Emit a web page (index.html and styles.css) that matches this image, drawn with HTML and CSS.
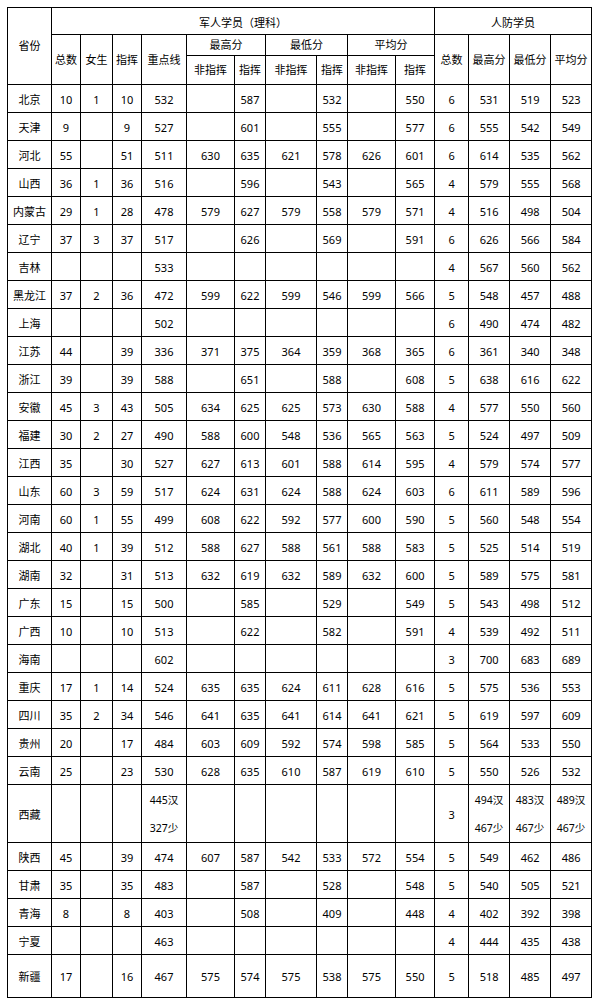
FILE: index.html
```html
<!DOCTYPE html>
<html lang="zh">
<head>
<meta charset="utf-8">
<title>录取分数</title>
<link rel="stylesheet" href="styles.css">
</head>
<body>
<table class="score">
<colgroup>
<col class="c44"><col class="c29"><col class="c32"><col class="c29"><col class="c45">
<col class="c48"><col class="c31"><col class="c51"><col class="c31"><col class="c48"><col class="c39">
<col class="c34"><col class="c41"><col class="c41"><col class="c41">
</colgroup>
<thead>
<tr class="h1"><th rowspan="3">省份</th><th colspan="10" class="grp">军人学员（理科）</th><th colspan="4" class="grp">人防学员</th></tr>
<tr class="h2"><th rowspan="2">总数</th><th rowspan="2">女生</th><th rowspan="2">指挥</th><th rowspan="2">重点线</th><th colspan="2">最高分</th><th colspan="2">最低分</th><th colspan="2">平均分</th><th rowspan="2">总数</th><th rowspan="2">最高分</th><th rowspan="2">最低分</th><th rowspan="2">平均分</th></tr>
<tr class="h3"><th>非指挥</th><th>指挥</th><th>非指挥</th><th>指挥</th><th>非指挥</th><th>指挥</th></tr>
</thead>
<tbody>
<tr><td>北京</td><td>10</td><td>1</td><td>10</td><td>532</td><td></td><td>587</td><td></td><td>532</td><td></td><td>550</td><td>6</td><td>531</td><td>519</td><td>523</td></tr>
<tr><td>天津</td><td>9</td><td></td><td>9</td><td>527</td><td></td><td>601</td><td></td><td>555</td><td></td><td>577</td><td>6</td><td>555</td><td>542</td><td>549</td></tr>
<tr><td>河北</td><td>55</td><td></td><td>51</td><td>511</td><td>630</td><td>635</td><td>621</td><td>578</td><td>626</td><td>601</td><td>6</td><td>614</td><td>535</td><td>562</td></tr>
<tr><td>山西</td><td>36</td><td>1</td><td>36</td><td>516</td><td></td><td>596</td><td></td><td>543</td><td></td><td>565</td><td>4</td><td>579</td><td>555</td><td>568</td></tr>
<tr><td>内蒙古</td><td>29</td><td>1</td><td>28</td><td>478</td><td>579</td><td>627</td><td>579</td><td>558</td><td>579</td><td>571</td><td>4</td><td>516</td><td>498</td><td>504</td></tr>
<tr><td>辽宁</td><td>37</td><td>3</td><td>37</td><td>517</td><td></td><td>626</td><td></td><td>569</td><td></td><td>591</td><td>6</td><td>626</td><td>566</td><td>584</td></tr>
<tr><td>吉林</td><td></td><td></td><td></td><td>533</td><td></td><td></td><td></td><td></td><td></td><td></td><td>4</td><td>567</td><td>560</td><td>562</td></tr>
<tr><td>黑龙江</td><td>37</td><td>2</td><td>36</td><td>472</td><td>599</td><td>622</td><td>599</td><td>546</td><td>599</td><td>566</td><td>5</td><td>548</td><td>457</td><td>488</td></tr>
<tr><td>上海</td><td></td><td></td><td></td><td>502</td><td></td><td></td><td></td><td></td><td></td><td></td><td>6</td><td>490</td><td>474</td><td>482</td></tr>
<tr><td>江苏</td><td>44</td><td></td><td>39</td><td>336</td><td>371</td><td>375</td><td>364</td><td>359</td><td>368</td><td>365</td><td>6</td><td>361</td><td>340</td><td>348</td></tr>
<tr><td>浙江</td><td>39</td><td></td><td>39</td><td>588</td><td></td><td>651</td><td></td><td>588</td><td></td><td>608</td><td>5</td><td>638</td><td>616</td><td>622</td></tr>
<tr><td>安徽</td><td>45</td><td>3</td><td>43</td><td>505</td><td>634</td><td>625</td><td>625</td><td>573</td><td>630</td><td>588</td><td>4</td><td>577</td><td>550</td><td>560</td></tr>
<tr><td>福建</td><td>30</td><td>2</td><td>27</td><td>490</td><td>588</td><td>600</td><td>548</td><td>536</td><td>565</td><td>563</td><td>5</td><td>524</td><td>497</td><td>509</td></tr>
<tr><td>江西</td><td>35</td><td></td><td>30</td><td>527</td><td>627</td><td>613</td><td>601</td><td>588</td><td>614</td><td>595</td><td>4</td><td>579</td><td>574</td><td>577</td></tr>
<tr><td>山东</td><td>60</td><td>3</td><td>59</td><td>517</td><td>624</td><td>631</td><td>624</td><td>588</td><td>624</td><td>603</td><td>6</td><td>611</td><td>589</td><td>596</td></tr>
<tr><td>河南</td><td>60</td><td>1</td><td>55</td><td>499</td><td>608</td><td>622</td><td>592</td><td>577</td><td>600</td><td>590</td><td>5</td><td>560</td><td>548</td><td>554</td></tr>
<tr><td>湖北</td><td>40</td><td>1</td><td>39</td><td>512</td><td>588</td><td>627</td><td>588</td><td>561</td><td>588</td><td>583</td><td>5</td><td>525</td><td>514</td><td>519</td></tr>
<tr><td>湖南</td><td>32</td><td></td><td>31</td><td>513</td><td>632</td><td>619</td><td>632</td><td>589</td><td>632</td><td>600</td><td>5</td><td>589</td><td>575</td><td>581</td></tr>
<tr><td>广东</td><td>15</td><td></td><td>15</td><td>500</td><td></td><td>585</td><td></td><td>529</td><td></td><td>549</td><td>5</td><td>543</td><td>498</td><td>512</td></tr>
<tr><td>广西</td><td>10</td><td></td><td>10</td><td>513</td><td></td><td>622</td><td></td><td>582</td><td></td><td>591</td><td>4</td><td>539</td><td>492</td><td>511</td></tr>
<tr><td>海南</td><td></td><td></td><td></td><td>602</td><td></td><td></td><td></td><td></td><td></td><td></td><td>3</td><td>700</td><td>683</td><td>689</td></tr>
<tr><td>重庆</td><td>17</td><td>1</td><td>14</td><td>524</td><td>635</td><td>635</td><td>624</td><td>611</td><td>628</td><td>616</td><td>5</td><td>575</td><td>536</td><td>553</td></tr>
<tr><td>四川</td><td>35</td><td>2</td><td>34</td><td>546</td><td>641</td><td>635</td><td>641</td><td>614</td><td>641</td><td>621</td><td>5</td><td>619</td><td>597</td><td>609</td></tr>
<tr><td>贵州</td><td>20</td><td></td><td>17</td><td>484</td><td>603</td><td>609</td><td>592</td><td>574</td><td>598</td><td>585</td><td>5</td><td>564</td><td>533</td><td>550</td></tr>
<tr><td>云南</td><td>25</td><td></td><td>23</td><td>530</td><td>628</td><td>635</td><td>610</td><td>587</td><td>619</td><td>610</td><td>5</td><td>550</td><td>526</td><td>532</td></tr>
<tr class="tall"><td>西藏</td><td></td><td></td><td></td><td class="two">445汉<br>327少</td><td></td><td></td><td></td><td></td><td></td><td></td><td>3</td><td class="two">494汉<br>467少</td><td class="two">483汉<br>467少</td><td class="two">489汉<br>467少</td></tr>
<tr><td>陕西</td><td>45</td><td></td><td>39</td><td>474</td><td>607</td><td>587</td><td>542</td><td>533</td><td>572</td><td>554</td><td>5</td><td>549</td><td>462</td><td>486</td></tr>
<tr><td>甘肃</td><td>35</td><td></td><td>35</td><td>483</td><td></td><td>587</td><td></td><td>528</td><td></td><td>548</td><td>5</td><td>540</td><td>505</td><td>521</td></tr>
<tr><td>青海</td><td>8</td><td></td><td>8</td><td>403</td><td></td><td>508</td><td></td><td>409</td><td></td><td>448</td><td>4</td><td>402</td><td>392</td><td>398</td></tr>
<tr><td>宁夏</td><td></td><td></td><td></td><td>463</td><td></td><td></td><td></td><td></td><td></td><td></td><td>4</td><td>444</td><td>435</td><td>438</td></tr>
<tr class="last"><td>新疆</td><td>17</td><td></td><td>16</td><td>467</td><td>575</td><td>574</td><td>575</td><td>538</td><td>575</td><td>550</td><td>5</td><td>518</td><td>485</td><td>497</td></tr>
</tbody>
</table>
</body>
</html>
```

FILE: styles.css
```css
html, body {
  margin: 0;
  padding: 0;
  background: #ffffff;
}
body {
  padding: 7px 0 0 7px;
  font-family: "Noto Sans", "Noto Sans CJK SC", sans-serif;
  font-size: 11px;
  color: #000000;
}
.score {
  border-collapse: collapse;
  table-layout: fixed;
  width: 585px;
}
.score th, .score td {
  border: 1px solid #000000;
  padding: 0;
  text-align: center;
  vertical-align: middle;
  font-weight: normal;
  line-height: 14px;
  white-space: nowrap;
  overflow: hidden;
}
.c44 { width: 44px; }
.c29 { width: 29px; }
.c32 { width: 32px; }
.c45 { width: 45px; }
.c48 { width: 48px; }
.c31 { width: 31px; }
.c51 { width: 51px; }
.c39 { width: 39px; }
.c34 { width: 34px; }
.c41 { width: 41px; }
.h1 { height: 27px; }
.score .h1 .grp { padding-top: 4px; }
.h2 { height: 21px; }
.h3 { height: 29px; }
.score tbody tr { height: 28px; }
.score tbody tr { padding-top: 0; }
.score tbody td { padding-top: 2px; }
.score tbody tr.tall { height: 58px; }
.score tbody tr.last { height: 43px; }
.score tbody td.two { line-height: 28px; font-size: 10.5px; padding-top: 0; }
```
